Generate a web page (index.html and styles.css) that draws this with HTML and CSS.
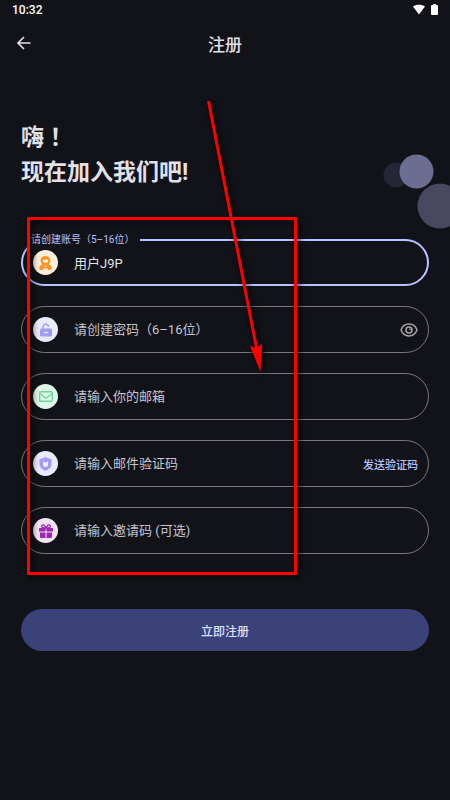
FILE: index.html
```html
<!DOCTYPE html>
<html lang="zh-CN">
<head>
<meta charset="utf-8">
<meta name="viewport" content="width=device-width, initial-scale=1">
<title>注册</title>
<link rel="stylesheet" href="styles.css">
</head>
<body>
<div class="status">
  <span>10:32</span>
  <span class="status-icons">
    <svg width="12" height="11" viewBox="0 0 12 11" fill="#fff"><path d="M0 2.600C3.300.2 8.700.2 12 2.600L6 10.400Z"/></svg>
    <svg width="7" height="11" viewBox="0 0 7 11" fill="#fff"><path d="M2 0h3v1h1q1 0 1 1v8q0 1-1 1H1q-1 0-1-1V2q0-1 1-1h1z"/></svg>
  </span>
</div>
<header class="topbar">
  <button class="back" type="button" aria-label="返回">
    <svg width="14" height="14" viewBox="0 0 14 14" fill="none" stroke="#e2e1e9" stroke-width="1.600"><path d="M13.500 7H1.500M7 1 1 7l6 6"/></svg>
  </button>
  <h1>注册</h1>
</header>
<main>
  <h2>嗨<span class="bang" lang="zh-TW">！</span><br>现在加入我们吧!</h2>
  <form class="form">
    <div class="field active">
      <label class="float" for="account">请创建账号（5–16位）</label>
      <span class="badge orange">
        <svg width="13" height="14" viewBox="0 0 13 14"><path fill="#ff941f" fill-rule="evenodd" d="M6.500 0a4.900 4.700 0 0 1 3.100 8.300C11.600 9 12.700 10.500 12.700 12.600q0 1.400-1.400 1.400H9.300l-1-1.800H4.700l-1 1.800H1.700Q.3 14 .3 12.600C.3 10.500 1.400 9 3.400 8.300A4.900 4.700 0 0 1 6.500 0ZM3.700 5.200a2.900 2.300 0 0 0 5.600 0Q9.300 3.800 8 3.500H5Q3.700 3.800 3.700 5.200ZM4.500 9.800l2 1.200 2-1.200z"/></svg>
      </span>
      <input id="account" type="text" value="用户J9P">
    </div>
    <div class="field">
      <label class="badge violet" for="password" aria-label="密码">
        <svg width="12" height="14" viewBox="0 0 12 14"><path d="M3 6V4a2.800 2.800 0 0 1 5.500-.8" fill="none" stroke="#a9a5f8" stroke-width="1.600" stroke-linecap="round"/><rect y="5.500" width="12" height="8" rx="1.500" fill="#a19cf8"/><path d="M4.500 9.500h3" stroke="#ebeaff" stroke-width="1.400" stroke-linecap="round"/></svg>
      </label>
      <input id="password" type="password" placeholder="请创建密码（6–16位）">
      <button class="eye" type="button" aria-label="显示密码">
        <svg width="18" height="14" viewBox="0 0 18 14" fill="none" stroke="#a5a5aa" stroke-width="1.500"><path d="M1 7C4-.9 14-.9 17 7 14 14.900 4 14.900 1 7Z"/><circle cx="9" cy="7" r="3"/><circle cx="10" cy="6.300" r=".9" fill="#a5a5aa" stroke="none"/></svg>
      </button>
    </div>
    <div class="field">
      <label class="badge green" for="email" aria-label="邮箱">
        <svg width="14" height="11" viewBox="0 0 14 11" fill="none" stroke="#72d5a0" stroke-width="1.400" stroke-linejoin="round"><rect x=".7" y=".7" width="12.600" height="9.600" rx="1"/><path d="m1 2.500 4.500 3.700q1.500 1.200 3 0L13 2.500"/></svg>
      </label>
      <input id="email" type="email" placeholder="请输入你的邮箱">
    </div>
    <div class="field">
      <label class="badge violet" for="code" aria-label="验证码">
        <svg width="13" height="14" viewBox="0 0 13 14"><path fill="#a19cf8" d="M6.500 0Q9 1.600 12.500 2v5q0 4.400-6 7-6-2.600-6-7V2Q4 1.600 6.500 0Z"/><path fill="#ebeaff" d="m4 4.200 1.500 1h2L9 4.200v3.300a2.500 2.500 0 0 1-5 0Z"/></svg>
      </label>
      <input id="code" type="text" placeholder="请输入邮件验证码">
      <button class="send" type="button">发送验证码</button>
    </div>
    <div class="field">
      <label class="badge purple" for="invite" aria-label="邀请码">
        <svg width="14" height="14" viewBox="0 0 14 14"><path d="M6.500 4Q2.500 4 2.500 2.300 3 .2 5 1.200 6.500 2.400 7 4 7.500 2.400 9 1.200 11 .2 11.500 2.300 11.500 4 7.500 4" fill="none" stroke="#9c27b0" stroke-width="1.300"/><path fill="#9c27b0" d="M1 4h5.500v3.500H0V5q0-1 1-1Zm6.500 0H13q1 0 1 1v2.500H7.500ZM1 8.500h5.500V14H2q-1 0-1-1Zm6.500 0H13V13q0 1-1 1H7.500Z"/></svg>
      </label>
      <input id="invite" type="text" placeholder="请输入邀请码 (可选)">
    </div>
    <button class="submit" type="submit">立即注册</button>
  </form>
</main>
<svg class="bubbles" width="70" height="76" viewBox="0 0 70 76" aria-hidden="true">
  <circle cx="36.500" cy="17.500" r="17" fill="#6b6d91"/>
  <circle cx="16" cy="21" r="12.500" fill="#7879b4" fill-opacity=".19"/>
  <circle cx="60" cy="52" r="22.500" fill="#484960"/>
</svg>
<svg class="marks" width="280" height="490" viewBox="0 0 280 490" aria-hidden="true">
  <rect x="8.500" y="128.500" width="267" height="355" fill="none" stroke="#f00" stroke-width="3"/>
  <path d="M188.500 11 236.500 258" stroke="#f00" stroke-width="3"/>
  <path d="m230 256 6 2 6-4-1.500 28z" fill="#f00"/>
</svg>
</body>
</html>
```
FILE: styles.css
```css
* { box-sizing: border-box; }

body {
  margin: 0;
  min-height: 100vh;
  position: relative;
  background: #121318;
  color: #e2e1e9;
  font-family: Roboto, "Noto Sans CJK SC", sans-serif;
}

button, input {
  font-family: inherit;
  border: 0;
  padding: 0;
  background: none;
  color: inherit;
}

svg { display: block; }

.status {
  display: flex;
  align-items: center;
  justify-content: space-between;
  height: 20px;
  padding: 0 12px;
  color: #fff;
  font-size: 12px;
  font-weight: 500;
}

.status-icons {
  display: flex;
  gap: 6px;
  height: 13px;
}

.topbar {
  display: grid;
  grid-template-columns: 14px 1fr 14px;
  align-items: center;
  height: 46px;
  padding: 0 17px;
}

h1 {
  margin: 0;
  text-align: center;
  font-size: 17px;
  font-weight: 500;
}

main { padding: 52px 21px 40px; }

h2 {
  margin: 0;
  font-size: 23px;
  line-height: 35px;
  font-weight: 700;
}

.bang { font-family: "Noto Sans CJK TC", sans-serif; }

.form {
  display: flex;
  flex-direction: column;
  gap: 20px;
  margin-top: 49px;
}

.field {
  position: relative;
  display: flex;
  align-items: center;
  height: 47px;
  padding: 0 10px 0 11px;
  border: 1px solid #77777c;
  border-radius: 24px;
}

.active {
  border: 2px solid #b8c3ff;
  padding: 0 9px 0 10px;
}

.float {
  position: absolute;
  top: -8px;
  left: 6px;
  padding: 0 6px 0 2px;
  background: #121318;
  color: #b8c3ff;
  font-size: 10px;
  line-height: 14px;
}

.badge {
  display: grid;
  place-items: center;
  flex: none;
  width: 25px;
  height: 25px;
  margin-right: 16px;
  border-radius: 50%;
}

.orange { background: #ffede0; }
.violet { background: #ebeaff; }
.green { background: #def8e9; }
.purple { background: #f3e3f6; }

input {
  flex: 1;
  min-width: 0;
  height: 24px;
  outline: 0;
  font-size: 13px;
}

input::placeholder {
  color: #c6c5d0;
  opacity: 1;
}

.send {
  color: #b8c3ff;
  font-size: 11px;
  font-weight: 500;
}

.submit {
  height: 42px;
  margin-top: 35px;
  border-radius: 21px;
  background: #3a4279;
  color: #dde1ff;
  font-size: 12px;
  font-weight: 500;
}

.bubbles {
  position: absolute;
  top: 154px;
  right: 0;
}

.marks {
  position: absolute;
  top: 90px;
  left: 20px;
  pointer-events: none;
  filter: drop-shadow(2px 2px 3px #000);
}
```
